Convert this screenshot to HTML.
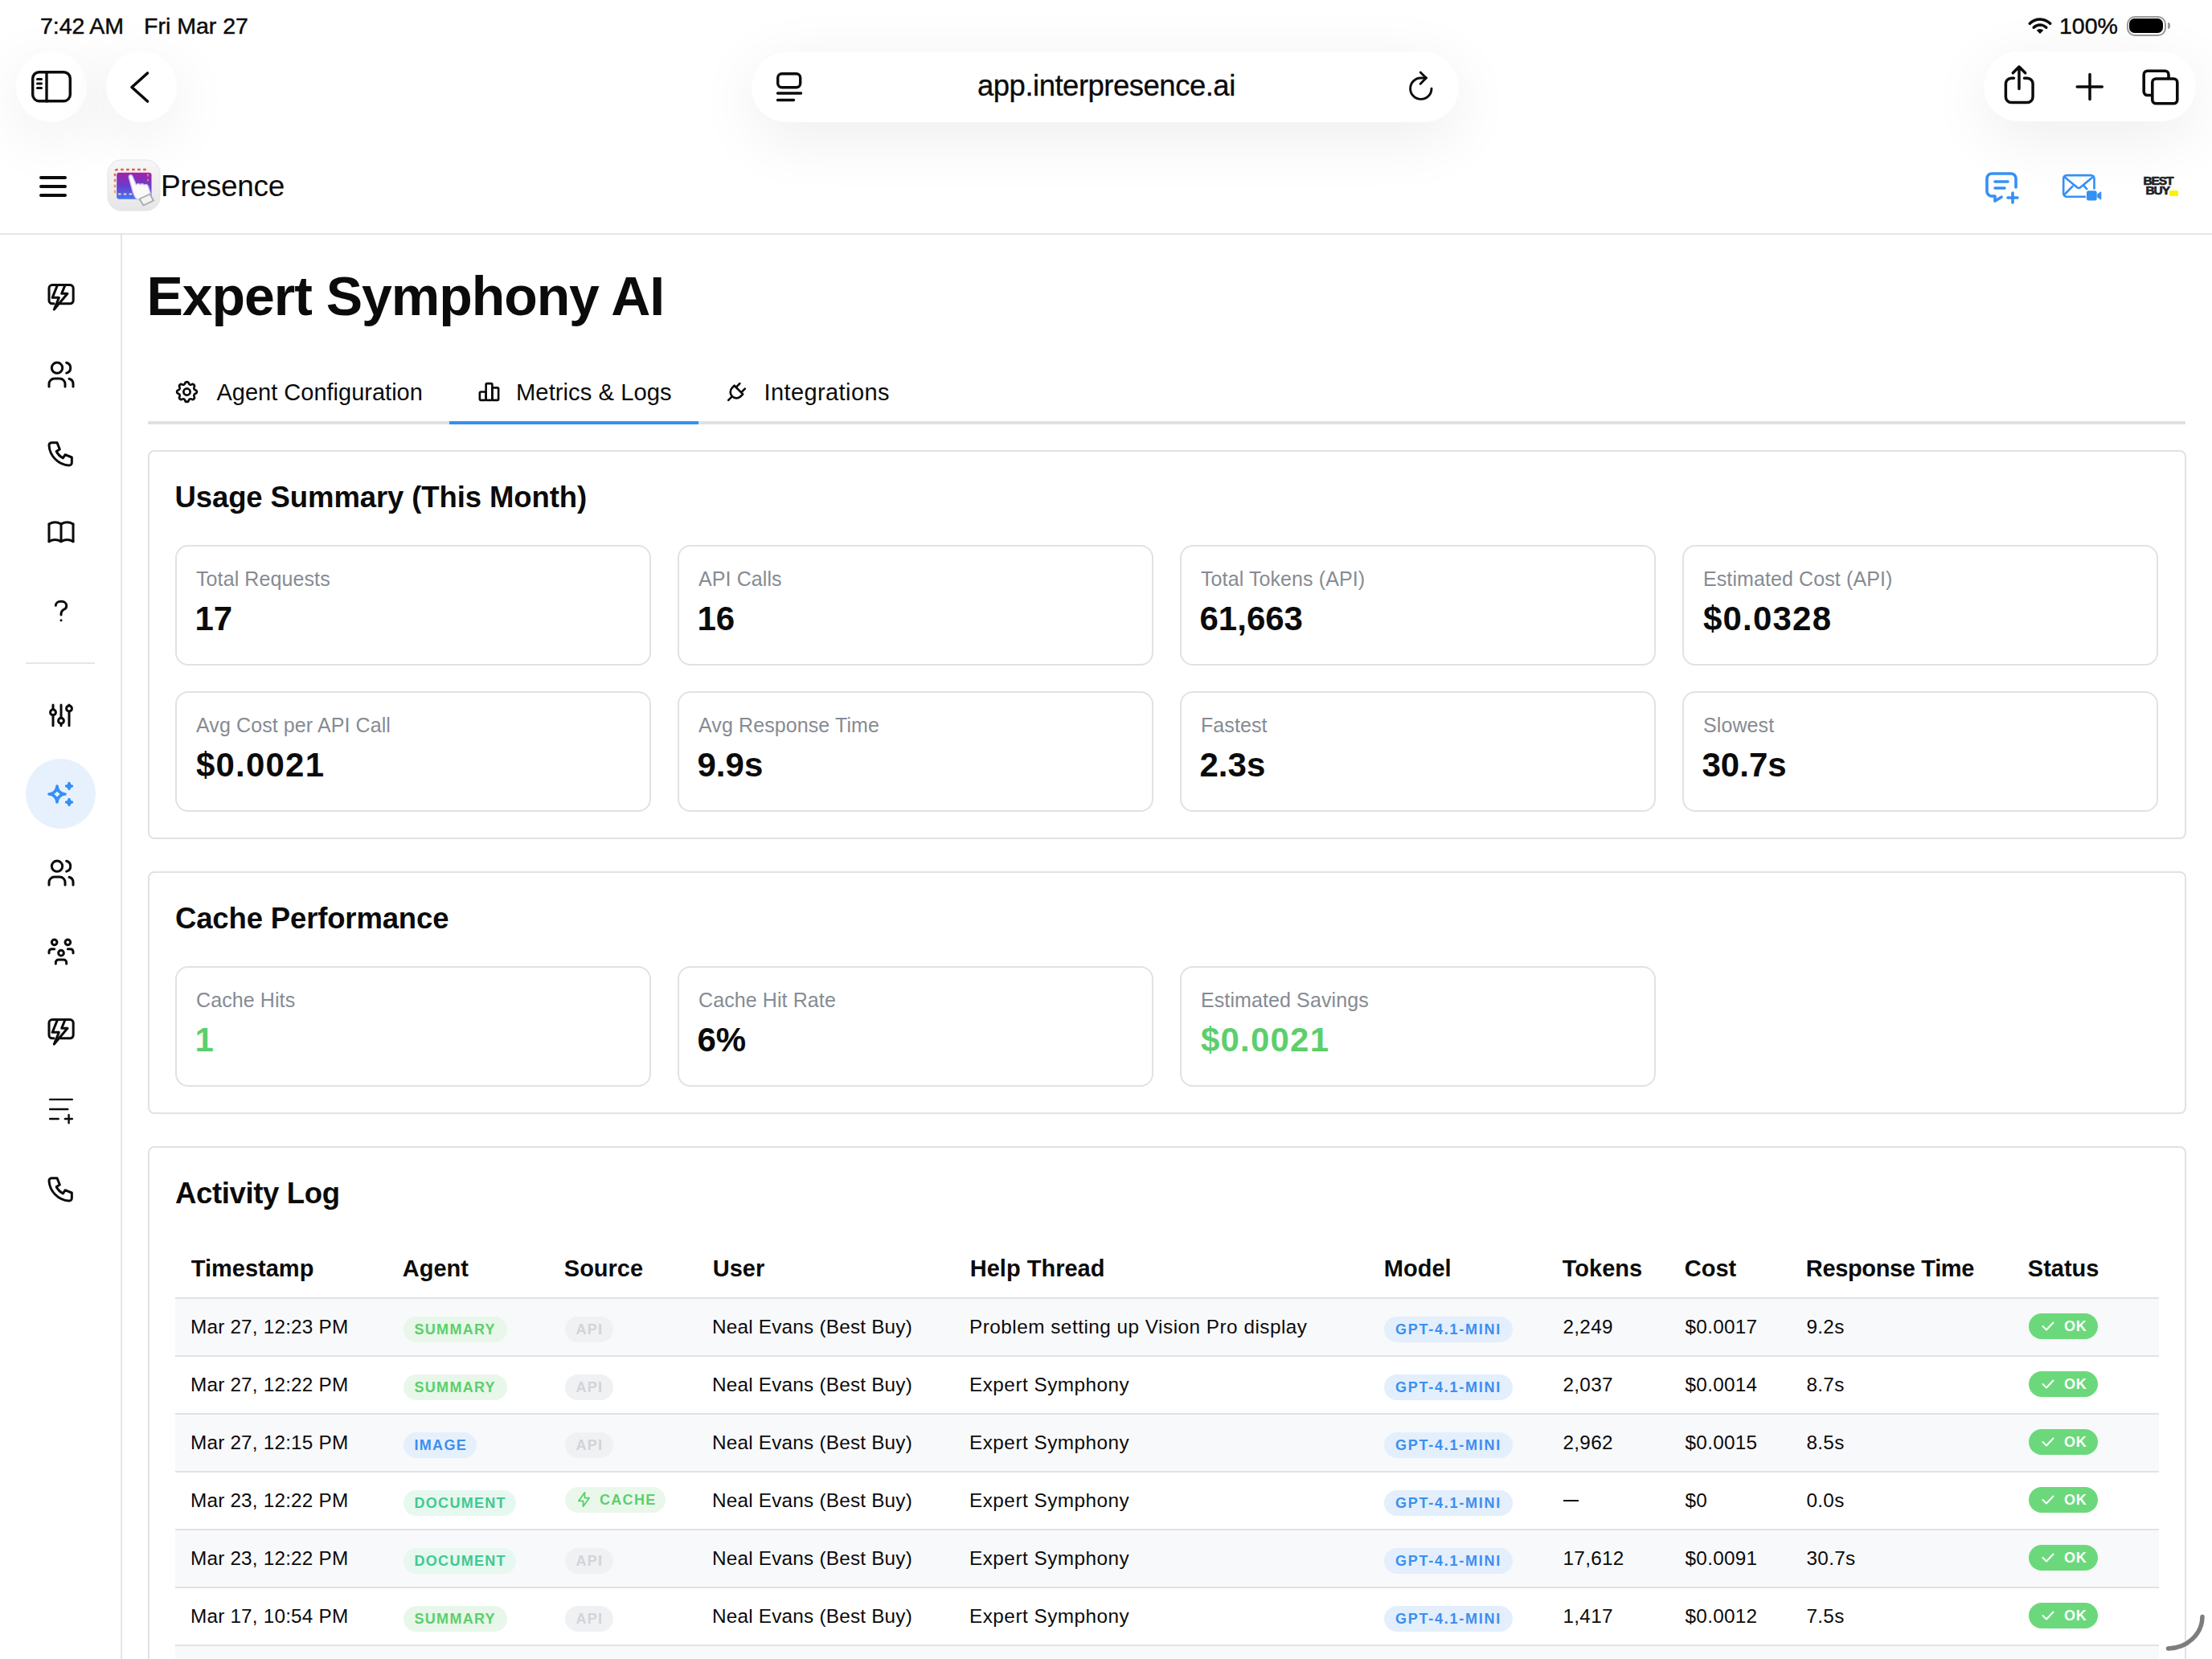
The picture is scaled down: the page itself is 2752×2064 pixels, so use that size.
<!DOCTYPE html><html><head><meta charset="utf-8"><style>
html,body{margin:0;padding:0;}
body{width:2752px;height:2064px;overflow:hidden;position:relative;background:#fff;font-family:"Liberation Sans",sans-serif;}
.t{position:absolute;line-height:1;white-space:nowrap;}
.b{position:absolute;box-sizing:border-box;}
.s{position:absolute;overflow:visible;}
.ic{fill:none;stroke:#0b0b0b;stroke-linecap:round;stroke-linejoin:round;}
</style></head><body>
<div class="t" style="left:50px;top:17.87px;font-size:28.5px;color:#0b0b0b;-webkit-text-stroke:0.45px #0b0b0b;">7:42&thinsp;AM</div>
<div class="t" style="left:179px;top:17.87px;font-size:28.5px;color:#0b0b0b;-webkit-text-stroke:0.45px #0b0b0b;">Fri Mar 27</div>
<div class="t" style="left:2562px;top:17.87px;font-size:28.5px;color:#0b0b0b;-webkit-text-stroke:0.45px #0b0b0b;">100%</div>
<svg class="s" style="left:2522px;top:20px;" width="32" height="24" viewBox="0 0 32 24"><path d="M16 22 L11.76 17.76 A6 6 0 0 1 20.24 17.76 Z" fill="#0b0b0b"/><path d="M8.2 14.2 A11 11 0 0 1 23.8 14.2" stroke="#0b0b0b" stroke-width="3.4" fill="none" stroke-linecap="round"/><path d="M3.3 9.3 A18 18 0 0 1 28.7 9.3" stroke="#0b0b0b" stroke-width="3.5" fill="none" stroke-linecap="round"/></svg>
<div class="b" style="left:2645.5px;top:19.5px;width:49.0px;height:25.0px;border:2px solid #9a9a9a;border-radius:10px;"></div>
<div class="b" style="left:2649px;top:23px;width:42px;height:18.299999999999997px;background:#000;border-radius:6.5px;"></div>
<div class="b" style="left:2696.5px;top:27.5px;width:3.5px;height:8.5px;background:#9a9a9a;border-radius:0 3px 3px 0;"></div>
<div class="b" style="left:20px;top:64px;width:88px;height:88px;box-shadow:0 18px 80px rgba(0,0,0,0.075);background:#fff;border-radius:50%;"></div>
<div class="b" style="left:132px;top:64px;width:88px;height:88px;box-shadow:0 18px 80px rgba(0,0,0,0.075);background:#fff;border-radius:50%;"></div>
<div class="b" style="left:935px;top:65px;width:880px;height:87px;box-shadow:0 18px 80px rgba(0,0,0,0.075);background:#fff;border-radius:44px;"></div>
<div class="b" style="left:2468px;top:64px;width:264px;height:87px;box-shadow:0 18px 80px rgba(0,0,0,0.075);background:#fff;border-radius:44px;"></div>
<svg class="s" style="left:37px;top:86px;" width="54" height="44" viewBox="0 0 54 44"><rect x="3.7" y="3.7" width="46.6" height="36" rx="8" class="ic" stroke-width="3.4"/><path d="M21 4v36" class="ic" stroke-width="3.4"/><path d="M9.5 12.5h5M9.5 18h5M9.5 23.5h5" class="ic" stroke-width="3"/></svg>
<svg class="s" style="left:160px;top:88px;" width="28" height="42" viewBox="0 0 28 42"><path d="M23.5 3 L4 20.5 L23.5 38" class="ic" stroke-width="3.6"/></svg>
<svg class="s" style="left:962px;top:86px;" width="40" height="44" viewBox="0 0 40 44"><rect x="5.7" y="5.7" width="28" height="17" rx="5" class="ic" stroke-width="3.4"/><path d="M5.5 30h29M5.5 38.5h20" class="ic" stroke-width="3.4"/></svg>
<div class="t" style="left:1216px;top:89.49px;font-size:36.5px;letter-spacing:-0.5px;color:#0b0b0b;-webkit-text-stroke:0.3px #0b0b0b;">app.interpresence.ai</div>
<svg class="s" style="left:1746px;top:84px;" width="44" height="44" viewBox="0 0 44 44"><path d="M28.5 13 H21.8 A13.2 13.2 0 1 0 35 26.2" class="ic" stroke-width="2.9"/><path d="M21.2 6 L28.3 13 L21.2 20.3" class="ic" stroke-width="2.9"/></svg>
<svg class="s" style="left:2488px;top:78px;" width="48" height="56" viewBox="0 0 48 56"><path d="M17.5 19.2 H14.4 A7 7 0 0 0 7.4 26.2 V42.5 A7 7 0 0 0 14.4 49.5 H34.1 A7 7 0 0 0 41.1 42.5 V26.2 A7 7 0 0 0 34.1 19.2 H30.5" class="ic" stroke-width="3.5"/><path d="M24 32.6 V5.5 M16.3 12.8 L24 5 L31.7 12.8" class="ic" stroke-width="3.5"/></svg>
<svg class="s" style="left:2578px;top:86px;" width="44" height="44" viewBox="0 0 44 44"><path d="M22 6.5 V37.6 M6.2 22 H37.3" class="ic" stroke-width="3.5"/></svg>
<svg class="s" style="left:2660px;top:82px;" width="56" height="52" viewBox="0 0 56 52"><path d="M16 36.5 H11.7 A4.5 4.5 0 0 1 7.2 32 V10.7 A4.5 4.5 0 0 1 11.7 6.2 H33.5 A4.5 4.5 0 0 1 38 10.7 V14.5" class="ic" stroke-width="3.6" stroke-linecap="butt"/><rect x="17.8" y="16" width="31" height="30.7" rx="4.5" class="ic" stroke-width="3.6"/></svg>
<div class="b" style="left:49px;top:219px;width:34px;height:4px;background:#0b0b0b;border-radius:2px;"></div>
<div class="b" style="left:49px;top:229.5px;width:34px;height:4.0px;background:#0b0b0b;border-radius:2px;"></div>
<div class="b" style="left:49px;top:241px;width:34px;height:4px;background:#0b0b0b;border-radius:2px;"></div>
<svg class="s" style="left:130px;top:194px" width="76" height="74" viewBox="0 0 76 74">
<defs><linearGradient id="lg" x1="0" y1="0" x2="0" y2="1"><stop offset="0" stop-color="#a322a6"/><stop offset="0.5" stop-color="#6a3ccf"/><stop offset="1" stop-color="#4677f2"/></linearGradient>
<linearGradient id="bgl" x1="0" y1="0" x2="0" y2="1"><stop offset="0" stop-color="#f6f6f6"/><stop offset="1" stop-color="#e6e6e6"/></linearGradient>
<linearGradient id="dl" x1="0" y1="0" x2="0" y2="1"><stop offset="0" stop-color="#e9563c"/><stop offset="1" stop-color="#f2b050"/></linearGradient></defs>
<rect x="4" y="5" width="65" height="63" rx="17" fill="url(#bgl)" stroke="#e4e4e4" stroke-width="1"/>
<rect x="15.2" y="20.8" width="43.3" height="33" rx="3" fill="url(#lg)"/>
<path d="M13 46.3 V20 A3 3 0 0 1 16 17 H51.5 A3 3 0 0 1 54 19.5" fill="none" stroke="url(#dl)" stroke-width="2.4" stroke-dasharray="3.6 3.4"/>
<path d="M54 22 V31.5" fill="none" stroke="#f0608a" stroke-width="2.2" stroke-dasharray="3.4 3"/>
<path d="M17 47.5 H35" fill="none" stroke="#f0d8b8" stroke-width="2.2" stroke-dasharray="3.6 3.2"/>
<path d="M30.2 26.5 C29.8 23.5 33.8 22.5 34.8 25 L39.5 36 C40.5 34 43.5 34 44.5 35.8 C45.5 34.2 48.5 34.3 49.3 36.2 C50.3 34.8 53.3 35 54.2 37 L57 45.5 C58 48 57.5 49.5 56 50.5 L46 54.5 C43 55.5 40 54 38 51.5 C37 49.5 36.5 48 35.5 46 Z" fill="#fafafa" stroke="#c8b8f0" stroke-width="1.2" stroke-linejoin="round"/>
<path d="M43.5 53.5 L56.5 47.5 L61 55.5 L48.5 61.5 Z" fill="#f3f3f3" stroke="#a9a9a9" stroke-width="1.8" stroke-linejoin="round"/>
</svg>
<div class="t" style="left:200px;top:213.27px;font-size:37px;letter-spacing:-0.3px;color:#0b0b0b;">Presence</div>
<svg class="s" style="left:2466px;top:208px;" width="48" height="48" viewBox="0 0 24 24"><g fill="none" stroke="#3490f4" stroke-width="1.8" stroke-linecap="round" stroke-linejoin="round"><path d="M8 9h8"/><path d="M8 13h6"/><path d="M12.01 18.594l-4.01 2.406v-3h-2a3 3 0 0 1 -3 -3v-8a3 3 0 0 1 3 -3h12a3 3 0 0 1 3 3v5.5"/><path d="M16 19h6"/><path d="M19 16v6"/></g></svg>
<svg class="s" style="left:2562px;top:212px;" width="56" height="42" viewBox="0 0 56 42"><path d="M33 32.7 H9.2 A4 4 0 0 1 5.2 28.7 V10.1 A4 4 0 0 1 9.2 6.1 H39.5 A4 4 0 0 1 43.5 10.1 V23.5" fill="none" stroke="#3490f4" stroke-width="2.6"/><path d="M6.6 8.2 L22 21 Q24.2 22.8 26.4 21 L41.7 8.2 M6 30.5 L17.2 19.2 M30.5 19.2 L35 23.8" fill="none" stroke="#3490f4" stroke-width="2.6" stroke-linecap="butt"/><rect x="34" y="25.3" width="12.7" height="12.3" rx="2.5" fill="#3490f4"/><path d="M47.7 29.5 L51.8 26.8 V36.1 L47.7 33.4 Z" fill="#3490f4" stroke="#3490f4" stroke-width="1" stroke-linejoin="round"/></svg>
<div class="t" style="left:2666.5px;top:216.57px;font-size:15.5px;font-weight:700;letter-spacing:-1.1px;color:#1d2226;-webkit-text-stroke:0.7px #1d2226;">BEST</div>
<div class="t" style="left:2669.5px;top:228.57px;font-size:15.5px;font-weight:700;letter-spacing:-1.1px;color:#1d2226;-webkit-text-stroke:0.7px #1d2226;">BUY</div>
<div class="b" style="left:2699px;top:237px;width:10.5px;height:6.599999999999994px;background:#fff200;border-radius:1.5px;"></div>
<div class="b" style="left:0px;top:290px;width:2752px;height:2px;background:#e3e6ea;"></div>
<div class="b" style="left:150px;top:292px;width:2px;height:1772px;background:#e3e6ea;"></div>
<svg class="s" style="left:56px;top:349px" width="40" height="40" viewBox="0 0 24 24" fill="none" stroke="#0b0b0b" stroke-width="1.8" stroke-linecap="round" stroke-linejoin="round"><path d="M6.6 17.3 H5.4 A2.4 2.4 0 0 1 3 14.9 V5.75 A2.4 2.4 0 0 1 5.4 3.35 H18.7 A2.4 2.4 0 0 1 21.1 5.75 V14.9 A2.4 2.4 0 0 1 18.7 17.3 H11.6"/><path d="M9.3 3.4 L5.5 12.8 H10.4 L6.8 21.6 L16.8 9.8 H12.4 L15 3.4"/></svg>
<svg class="s" style="left:56px;top:446px" width="40" height="40" viewBox="0 0 24 24" fill="none" stroke="#0b0b0b" stroke-width="1.8" stroke-linecap="round" stroke-linejoin="round"><path d="M5 7a4 4 0 1 0 8 0a4 4 0 1 0 -8 0"/><path d="M3 21v-2a4 4 0 0 1 4 -4h4a4 4 0 0 1 4 4v2"/><path d="M16 3.13a4 4 0 0 1 0 7.75"/><path d="M21 21v-2a4 4 0 0 0 -3 -3.85"/></svg>
<svg class="s" style="left:56px;top:544px" width="40" height="40" viewBox="0 0 24 24" fill="none" stroke="#0b0b0b" stroke-width="1.8" stroke-linecap="round" stroke-linejoin="round"><path d="M5 4h4l2 5l-2.5 1.5a11 11 0 0 0 5 5l1.5 -2.5l5 2v4a2 2 0 0 1 -2 2a16 16 0 0 1 -15 -15a2 2 0 0 1 2 -2"/></svg>
<svg class="s" style="left:56px;top:642px" width="40" height="40" viewBox="0 0 24 24" fill="none" stroke="#0b0b0b" stroke-width="1.8" stroke-linecap="round" stroke-linejoin="round"><path d="M3 19a9 9 0 0 1 9 0a9 9 0 0 1 9 0"/><path d="M3 6a9 9 0 0 1 9 0a9 9 0 0 1 9 0"/><path d="M3 6l0 13"/><path d="M12 6l0 13"/><path d="M21 6l0 13"/></svg>
<svg class="s" style="left:56px;top:739.6px" width="40" height="40" viewBox="0 0 24 24" fill="none" stroke="#0b0b0b" stroke-width="1.8" stroke-linecap="round" stroke-linejoin="round"><path d="M8 8a3.5 3 0 0 1 3.5 -3h1a3.5 3 0 0 1 3.5 3a3 3 0 0 1 -2 3a3 4 0 0 0 -2 4"/><path d="M12 19l0 .01"/></svg>
<div class="b" style="left:32px;top:824px;width:86px;height:2px;background:#e3e6ea;"></div>
<svg class="s" style="left:56px;top:869px" width="40" height="40" viewBox="0 0 24 24" fill="none" stroke="#0b0b0b" stroke-width="1.8" stroke-linecap="round" stroke-linejoin="round"><path d="M6 4.8V20.3M12 4.8V20.3M18 4.8V20.3"/><circle cx="6" cy="10.3" r="2.05" fill="#fff"/><circle cx="12" cy="16.6" r="2.05" fill="#fff"/><circle cx="18" cy="7.5" r="2.05" fill="#fff"/></svg>
<div class="b" style="left:32px;top:944px;width:87px;height:87px;background:#e7f1fd;border-radius:50%;"></div>
<svg class="s" style="left:56px;top:968px" width="40" height="40" viewBox="0 0 24 24" fill="none" stroke="#3490f4" stroke-width="2.2" stroke-linecap="round" stroke-linejoin="round"><path d="M16 18a2 2 0 0 1 2 2a2 2 0 0 1 2 -2a2 2 0 0 1 -2 -2a2 2 0 0 1 -2 2zm0 -12a2 2 0 0 1 2 2a2 2 0 0 1 2 -2a2 2 0 0 1 -2 -2a2 2 0 0 1 -2 2zm-7 12a6 6 0 0 1 6 -6a6 6 0 0 1 -6 -6a6 6 0 0 1 -6 6a6 6 0 0 1 6 6z"/></svg>
<svg class="s" style="left:56px;top:1066px" width="40" height="40" viewBox="0 0 24 24" fill="none" stroke="#0b0b0b" stroke-width="1.8" stroke-linecap="round" stroke-linejoin="round"><path d="M5 7a4 4 0 1 0 8 0a4 4 0 1 0 -8 0"/><path d="M3 21v-2a4 4 0 0 1 4 -4h4a4 4 0 0 1 4 4v2"/><path d="M16 3.13a4 4 0 0 1 0 7.75"/><path d="M21 21v-2a4 4 0 0 0 -3 -3.85"/></svg>
<svg class="s" style="left:56px;top:1164px" width="40" height="40" viewBox="0 0 24 24" fill="none" stroke="#0b0b0b" stroke-width="1.8" stroke-linecap="round" stroke-linejoin="round"><path d="M10 13a2 2 0 1 0 4 0a2 2 0 0 0 -4 0"/><path d="M8 21v-1a2 2 0 0 1 2 -2h4a2 2 0 0 1 2 2v1"/><path d="M15 5a2 2 0 1 0 4 0a2 2 0 0 0 -4 0"/><path d="M17 10h2a2 2 0 0 1 2 2v1"/><path d="M5 5a2 2 0 1 0 4 0a2 2 0 0 0 -4 0"/><path d="M3 13v-1a2 2 0 0 1 2 -2h2"/></svg>
<svg class="s" style="left:56px;top:1263px" width="40" height="40" viewBox="0 0 24 24" fill="none" stroke="#0b0b0b" stroke-width="1.8" stroke-linecap="round" stroke-linejoin="round"><path d="M6.6 17.3 H5.4 A2.4 2.4 0 0 1 3 14.9 V5.75 A2.4 2.4 0 0 1 5.4 3.35 H18.7 A2.4 2.4 0 0 1 21.1 5.75 V14.9 A2.4 2.4 0 0 1 18.7 17.3 H11.6"/><path d="M9.3 3.4 L5.5 12.8 H10.4 L6.8 21.6 L16.8 9.8 H12.4 L15 3.4"/></svg>
<svg class="s" style="left:56px;top:1362px" width="40" height="40" viewBox="0 0 24 24" fill="none" stroke="#0b0b0b" stroke-width="1.45" stroke-linecap="round" stroke-linejoin="round"><path d="M3.7 3.5H20.3M3.7 10.75H17M3.7 18H10M14.9 18H20.3M17.75 15V21.1"/></svg>
<svg class="s" style="left:56px;top:1459px" width="40" height="40" viewBox="0 0 24 24" fill="none" stroke="#0b0b0b" stroke-width="1.8" stroke-linecap="round" stroke-linejoin="round"><path d="M5 4h4l2 5l-2.5 1.5a11 11 0 0 0 5 5l1.5 -2.5l5 2v4a2 2 0 0 1 -2 2a16 16 0 0 1 -15 -15a2 2 0 0 1 2 -2"/></svg>
<div class="t" style="left:182.5px;top:334.42px;font-size:68px;font-weight:700;letter-spacing:-1.05px;color:#0b0b0b;">Expert Symphony AI</div>
<svg class="s" style="left:215.5px;top:471px" width="33" height="33" viewBox="0 0 24 24" fill="none" stroke="#0b0b0b" stroke-width="1.95" stroke-linecap="round" stroke-linejoin="round"><path d="M10.325 4.317c.426 -1.756 2.924 -1.756 3.35 0a1.724 1.724 0 0 0 2.573 1.066c1.543 -.94 3.31 .826 2.37 2.37a1.724 1.724 0 0 0 1.065 2.572c1.756 .426 1.756 2.924 0 3.35a1.724 1.724 0 0 0 -1.066 2.573c.94 1.543 -.826 3.31 -2.37 2.37a1.724 1.724 0 0 0 -2.572 1.065c-.426 1.756 -2.924 1.756 -3.35 0a1.724 1.724 0 0 0 -2.573 -1.066c-1.543 .94 -3.31 -.826 -2.37 -2.37a1.724 1.724 0 0 0 -1.065 -2.572c-1.756 -.426 -1.756 -2.924 0 -3.35a1.724 1.724 0 0 0 1.066 -2.573c-.94 -1.543 .826 -3.31 2.37 -2.37c1 .608 2.296 .07 2.572 -1.065z"/><path d="M9 12a3 3 0 1 0 6 0a3 3 0 0 0 -6 0"/></svg>
<div class="t" style="left:269.5px;top:473.74px;font-size:29px;color:#0b0b0b;">Agent Configuration</div>
<svg class="s" style="left:592.5px;top:472px" width="31" height="31" viewBox="0 0 24 24" fill="none" stroke="#0b0b0b" stroke-width="2.05" stroke-linecap="round" stroke-linejoin="round"><path d="M3 13a1 1 0 0 1 1 -1h4a1 1 0 0 1 1 1v6a1 1 0 0 1 -1 1h-4a1 1 0 0 1 -1 -1z"/><path d="M15 9a1 1 0 0 1 1 -1h4a1 1 0 0 1 1 1v10a1 1 0 0 1 -1 1h-4a1 1 0 0 1 -1 -1z"/><path d="M9 5a1 1 0 0 1 1 -1h4a1 1 0 0 1 1 1v14a1 1 0 0 1 -1 1h-4a1 1 0 0 1 -1 -1z"/></svg>
<div class="t" style="left:642px;top:473.57px;font-size:29.2px;letter-spacing:0.05px;color:#0b0b0b;">Metrics &amp; Logs</div>
<svg class="s" style="left:900.5px;top:472px" width="31" height="31" viewBox="0 0 24 24" fill="none" stroke="#0b0b0b" stroke-width="2.05" stroke-linecap="round" stroke-linejoin="round"><path d="M9.785 6l8.215 8.215l-2.054 2.054a5.81 5.81 0 1 1 -8.215 -8.215l2.054 -2.054z"/><path d="M4 20l3.5 -3.5"/><path d="M15 4l-3.5 3.5"/><path d="M20 9l-3.5 3.5"/></svg>
<div class="t" style="left:950.5px;top:473.74px;font-size:29px;letter-spacing:0.4px;color:#0b0b0b;">Integrations</div>
<div class="b" style="left:184px;top:524px;width:2535px;height:4px;background:#dfe2e5;"></div>
<div class="b" style="left:559px;top:524px;width:310px;height:4px;background:#3490f4;"></div>
<div class="b" style="left:184px;top:560px;width:2536px;height:484px;border:2px solid #dfe2e6;border-radius:8px;"></div>
<div class="t" style="left:217.5px;top:601.29px;font-size:36.5px;font-weight:700;letter-spacing:-0.1px;color:#0b0b0b;">Usage Summary (This Month)</div>
<div class="b" style="left:217.5px;top:678px;width:592.0px;height:150px;border:2px solid #dfe2e6;border-radius:16px;"></div>
<div class="t" style="left:244.0px;top:707.83px;font-size:25px;letter-spacing:0.1px;color:#868b93;">Total Requests</div>
<div class="t" style="left:242.5px;top:748.93px;font-size:42px;font-weight:700;color:#0b0b0b;">17</div>
<div class="b" style="left:842.5px;top:678px;width:592.0px;height:150px;border:2px solid #dfe2e6;border-radius:16px;"></div>
<div class="t" style="left:869.0px;top:707.83px;font-size:25px;letter-spacing:0.1px;color:#868b93;">API Calls</div>
<div class="t" style="left:867.5px;top:748.93px;font-size:42px;font-weight:700;color:#0b0b0b;">16</div>
<div class="b" style="left:1467.5px;top:678px;width:592.0px;height:150px;border:2px solid #dfe2e6;border-radius:16px;"></div>
<div class="t" style="left:1494.0px;top:707.83px;font-size:25px;letter-spacing:0.1px;color:#868b93;">Total Tokens (API)</div>
<div class="t" style="left:1492.5px;top:748.93px;font-size:42px;font-weight:700;color:#0b0b0b;">61,663</div>
<div class="b" style="left:2092.5px;top:678px;width:592.0px;height:150px;border:2px solid #dfe2e6;border-radius:16px;"></div>
<div class="t" style="left:2119.0px;top:707.83px;font-size:25px;letter-spacing:0.1px;color:#868b93;">Estimated Cost (API)</div>
<div class="t" style="left:2119.0px;top:748.93px;font-size:42px;font-weight:700;letter-spacing:1.2px;color:#0b0b0b;">$0.0328</div>
<div class="b" style="left:217.5px;top:860px;width:592.0px;height:150px;border:2px solid #dfe2e6;border-radius:16px;"></div>
<div class="t" style="left:244.0px;top:889.83px;font-size:25px;letter-spacing:0.1px;color:#868b93;">Avg Cost per API Call</div>
<div class="t" style="left:244.0px;top:930.93px;font-size:42px;font-weight:700;letter-spacing:1.2px;color:#0b0b0b;">$0.0021</div>
<div class="b" style="left:842.5px;top:860px;width:592.0px;height:150px;border:2px solid #dfe2e6;border-radius:16px;"></div>
<div class="t" style="left:869.0px;top:889.83px;font-size:25px;letter-spacing:0.1px;color:#868b93;">Avg Response Time</div>
<div class="t" style="left:867.5px;top:930.93px;font-size:42px;font-weight:700;color:#0b0b0b;">9.9s</div>
<div class="b" style="left:1467.5px;top:860px;width:592.0px;height:150px;border:2px solid #dfe2e6;border-radius:16px;"></div>
<div class="t" style="left:1494.0px;top:889.83px;font-size:25px;letter-spacing:0.1px;color:#868b93;">Fastest</div>
<div class="t" style="left:1492.5px;top:930.93px;font-size:42px;font-weight:700;color:#0b0b0b;">2.3s</div>
<div class="b" style="left:2092.5px;top:860px;width:592.0px;height:150px;border:2px solid #dfe2e6;border-radius:16px;"></div>
<div class="t" style="left:2119.0px;top:889.83px;font-size:25px;letter-spacing:0.1px;color:#868b93;">Slowest</div>
<div class="t" style="left:2117.5px;top:930.93px;font-size:42px;font-weight:700;color:#0b0b0b;">30.7s</div>
<div class="b" style="left:184px;top:1084px;width:2536px;height:302px;border:2px solid #dfe2e6;border-radius:8px;"></div>
<div class="t" style="left:218px;top:1125.49px;font-size:36.5px;font-weight:700;letter-spacing:-0.15px;color:#0b0b0b;">Cache Performance</div>
<div class="b" style="left:217.5px;top:1202px;width:592.0px;height:150px;border:2px solid #dfe2e6;border-radius:16px;"></div>
<div class="t" style="left:244.0px;top:1231.83px;font-size:25px;letter-spacing:0.1px;color:#868b93;">Cache Hits</div>
<div class="t" style="left:242.5px;top:1272.93px;font-size:42px;font-weight:700;color:#5ccf6c;">1</div>
<div class="b" style="left:842.5px;top:1202px;width:592.0px;height:150px;border:2px solid #dfe2e6;border-radius:16px;"></div>
<div class="t" style="left:869.0px;top:1231.83px;font-size:25px;letter-spacing:0.1px;color:#868b93;">Cache Hit Rate</div>
<div class="t" style="left:867.5px;top:1272.93px;font-size:42px;font-weight:700;color:#0b0b0b;">6%</div>
<div class="b" style="left:1467.5px;top:1202px;width:592.0px;height:150px;border:2px solid #dfe2e6;border-radius:16px;"></div>
<div class="t" style="left:1494.0px;top:1231.83px;font-size:25px;letter-spacing:0.1px;color:#868b93;">Estimated Savings</div>
<div class="t" style="left:1494.0px;top:1272.93px;font-size:42px;font-weight:700;letter-spacing:1.2px;color:#5ccf6c;">$0.0021</div>
<div class="b" style="left:184px;top:1426px;width:2536px;height:774px;border:2px solid #dfe2e6;border-radius:8px;"></div>
<div class="t" style="left:218px;top:1467.39px;font-size:36.5px;font-weight:700;letter-spacing:-0.35px;color:#0b0b0b;">Activity Log</div>
<div class="t" style="left:237.8px;top:1563.84px;font-size:29px;font-weight:700;color:#0b0b0b;">Timestamp</div>
<div class="t" style="left:500.8px;top:1563.84px;font-size:29px;font-weight:700;color:#0b0b0b;">Agent</div>
<div class="t" style="left:701.8px;top:1563.84px;font-size:29px;font-weight:700;color:#0b0b0b;">Source</div>
<div class="t" style="left:886.8px;top:1563.84px;font-size:29px;font-weight:700;color:#0b0b0b;">User</div>
<div class="t" style="left:1206.8px;top:1563.84px;font-size:29px;font-weight:700;color:#0b0b0b;">Help Thread</div>
<div class="t" style="left:1721.8px;top:1563.84px;font-size:29px;font-weight:700;color:#0b0b0b;">Model</div>
<div class="t" style="left:1943.8px;top:1563.84px;font-size:29px;font-weight:700;color:#0b0b0b;">Tokens</div>
<div class="t" style="left:2095.8px;top:1563.84px;font-size:29px;font-weight:700;color:#0b0b0b;">Cost</div>
<div class="t" style="left:2246.8px;top:1563.84px;font-size:29px;font-weight:700;letter-spacing:-0.35px;color:#0b0b0b;">Response Time</div>
<div class="t" style="left:2522.8px;top:1563.84px;font-size:29px;font-weight:700;color:#0b0b0b;">Status</div>
<div class="b" style="left:218px;top:1614px;width:2468px;height:2px;background:#dfe2e6;"></div>
<div class="b" style="left:218px;top:1616px;width:2468px;height:70px;background:#f8f9fb;"></div>
<div class="b" style="left:218px;top:1686px;width:2468px;height:2px;background:#dfe2e6;"></div>
<div class="t" style="left:237px;top:1639.42px;font-size:24.3px;letter-spacing:0.2px;color:#0b0b0b;">Mar 27, 12:23 PM</div>
<div class="b" style="left:502px;top:1638px;width:129px;height:32px;border-radius:16px;background:#e8f7ea;"></div>
<div class="t" style="left:515.5px;top:1644.76px;font-size:18px;font-weight:700;letter-spacing:1.3px;color:#5ccf6c;">SUMMARY</div>
<div class="b" style="left:703px;top:1638px;width:60px;height:32px;border-radius:16px;background:#f0f1f3;"></div>
<div class="t" style="left:716.5px;top:1644.76px;font-size:18px;font-weight:700;letter-spacing:1.3px;color:#d1d4d8;">API</div>
<div class="t" style="left:886px;top:1639.42px;font-size:24.3px;letter-spacing:0.22px;color:#0b0b0b;">Neal Evans (Best Buy)</div>
<div class="t" style="left:1206px;top:1639.42px;font-size:24.3px;letter-spacing:0.5px;color:#0b0b0b;">Problem setting up Vision Pro display</div>
<div class="b" style="left:1722px;top:1638px;width:160px;height:32px;border-radius:16px;background:#e3effc;"></div>
<div class="t" style="left:1736px;top:1644.76px;font-size:18px;font-weight:700;letter-spacing:1.75px;color:#3b8ff0;">GPT-4.1-MINI</div>
<div class="t" style="left:1944.5px;top:1639.42px;font-size:24.3px;letter-spacing:0.3px;color:#0b0b0b;">2,249</div>
<div class="t" style="left:2096.5px;top:1639.42px;font-size:24.3px;letter-spacing:0.3px;color:#0b0b0b;">$0.0017</div>
<div class="t" style="left:2247.5px;top:1639.42px;font-size:24.3px;letter-spacing:0.3px;color:#0b0b0b;">9.2s</div>
<div class="b" style="left:2524px;top:1634px;width:86px;height:32px;background:#6bd97b;border-radius:16px;"></div>
<svg class="s" style="left:2539px;top:1643px;" width="18" height="14" viewBox="0 0 18 14"><path d="M2.5 7 L7 11.5 L15.5 2.5" fill="none" stroke="#fff" stroke-width="2" stroke-linecap="round" stroke-linejoin="round"/></svg>
<div class="t" style="left:2568px;top:1640.76px;font-size:18px;font-weight:700;letter-spacing:0.8px;color:#fff;">OK</div>
<div class="b" style="left:218px;top:1758px;width:2468px;height:2px;background:#dfe2e6;"></div>
<div class="t" style="left:237px;top:1711.42px;font-size:24.3px;letter-spacing:0.2px;color:#0b0b0b;">Mar 27, 12:22 PM</div>
<div class="b" style="left:502px;top:1710px;width:129px;height:32px;border-radius:16px;background:#e8f7ea;"></div>
<div class="t" style="left:515.5px;top:1716.76px;font-size:18px;font-weight:700;letter-spacing:1.3px;color:#5ccf6c;">SUMMARY</div>
<div class="b" style="left:703px;top:1710px;width:60px;height:32px;border-radius:16px;background:#f0f1f3;"></div>
<div class="t" style="left:716.5px;top:1716.76px;font-size:18px;font-weight:700;letter-spacing:1.3px;color:#d1d4d8;">API</div>
<div class="t" style="left:886px;top:1711.42px;font-size:24.3px;letter-spacing:0.22px;color:#0b0b0b;">Neal Evans (Best Buy)</div>
<div class="t" style="left:1206px;top:1711.42px;font-size:24.3px;letter-spacing:0.5px;color:#0b0b0b;">Expert Symphony</div>
<div class="b" style="left:1722px;top:1710px;width:160px;height:32px;border-radius:16px;background:#e3effc;"></div>
<div class="t" style="left:1736px;top:1716.76px;font-size:18px;font-weight:700;letter-spacing:1.75px;color:#3b8ff0;">GPT-4.1-MINI</div>
<div class="t" style="left:1944.5px;top:1711.42px;font-size:24.3px;letter-spacing:0.3px;color:#0b0b0b;">2,037</div>
<div class="t" style="left:2096.5px;top:1711.42px;font-size:24.3px;letter-spacing:0.3px;color:#0b0b0b;">$0.0014</div>
<div class="t" style="left:2247.5px;top:1711.42px;font-size:24.3px;letter-spacing:0.3px;color:#0b0b0b;">8.7s</div>
<div class="b" style="left:2524px;top:1706px;width:86px;height:32px;background:#6bd97b;border-radius:16px;"></div>
<svg class="s" style="left:2539px;top:1715px;" width="18" height="14" viewBox="0 0 18 14"><path d="M2.5 7 L7 11.5 L15.5 2.5" fill="none" stroke="#fff" stroke-width="2" stroke-linecap="round" stroke-linejoin="round"/></svg>
<div class="t" style="left:2568px;top:1712.76px;font-size:18px;font-weight:700;letter-spacing:0.8px;color:#fff;">OK</div>
<div class="b" style="left:218px;top:1760px;width:2468px;height:70px;background:#f8f9fb;"></div>
<div class="b" style="left:218px;top:1830px;width:2468px;height:2px;background:#dfe2e6;"></div>
<div class="t" style="left:237px;top:1783.42px;font-size:24.3px;letter-spacing:0.2px;color:#0b0b0b;">Mar 27, 12:15 PM</div>
<div class="b" style="left:502px;top:1782px;width:91px;height:32px;border-radius:16px;background:#e5f0fc;"></div>
<div class="t" style="left:515.5px;top:1788.76px;font-size:18px;font-weight:700;letter-spacing:1.3px;color:#3b8ff0;">IMAGE</div>
<div class="b" style="left:703px;top:1782px;width:60px;height:32px;border-radius:16px;background:#f0f1f3;"></div>
<div class="t" style="left:716.5px;top:1788.76px;font-size:18px;font-weight:700;letter-spacing:1.3px;color:#d1d4d8;">API</div>
<div class="t" style="left:886px;top:1783.42px;font-size:24.3px;letter-spacing:0.22px;color:#0b0b0b;">Neal Evans (Best Buy)</div>
<div class="t" style="left:1206px;top:1783.42px;font-size:24.3px;letter-spacing:0.5px;color:#0b0b0b;">Expert Symphony</div>
<div class="b" style="left:1722px;top:1782px;width:160px;height:32px;border-radius:16px;background:#e3effc;"></div>
<div class="t" style="left:1736px;top:1788.76px;font-size:18px;font-weight:700;letter-spacing:1.75px;color:#3b8ff0;">GPT-4.1-MINI</div>
<div class="t" style="left:1944.5px;top:1783.42px;font-size:24.3px;letter-spacing:0.3px;color:#0b0b0b;">2,962</div>
<div class="t" style="left:2096.5px;top:1783.42px;font-size:24.3px;letter-spacing:0.3px;color:#0b0b0b;">$0.0015</div>
<div class="t" style="left:2247.5px;top:1783.42px;font-size:24.3px;letter-spacing:0.3px;color:#0b0b0b;">8.5s</div>
<div class="b" style="left:2524px;top:1778px;width:86px;height:32px;background:#6bd97b;border-radius:16px;"></div>
<svg class="s" style="left:2539px;top:1787px;" width="18" height="14" viewBox="0 0 18 14"><path d="M2.5 7 L7 11.5 L15.5 2.5" fill="none" stroke="#fff" stroke-width="2" stroke-linecap="round" stroke-linejoin="round"/></svg>
<div class="t" style="left:2568px;top:1784.76px;font-size:18px;font-weight:700;letter-spacing:0.8px;color:#fff;">OK</div>
<div class="b" style="left:218px;top:1902px;width:2468px;height:2px;background:#dfe2e6;"></div>
<div class="t" style="left:237px;top:1855.42px;font-size:24.3px;letter-spacing:0.2px;color:#0b0b0b;">Mar 23, 12:22 PM</div>
<div class="b" style="left:502px;top:1854px;width:140px;height:32px;border-radius:16px;background:#e6f8f0;"></div>
<div class="t" style="left:515.5px;top:1860.76px;font-size:18px;font-weight:700;letter-spacing:1.3px;color:#40c990;">DOCUMENT</div>
<div class="b" style="left:703px;top:1850px;width:125px;height:32px;border-radius:16px;background:#eaf8ec;"></div>
<svg class="s" style="left:714.5px;top:1853.5px;" width="23" height="23" viewBox="0 0 24 24"><path d="M13 3l0 7l6 0l-8 11l0 -7l-6 0l8 -11" fill="none" stroke="#5ccf6c" stroke-width="1.9" stroke-linecap="round" stroke-linejoin="round"/></svg>
<div class="t" style="left:746px;top:1856.76px;font-size:18px;font-weight:700;letter-spacing:1.3px;color:#5ccf6c;">CACHE</div>
<div class="t" style="left:886px;top:1855.42px;font-size:24.3px;letter-spacing:0.22px;color:#0b0b0b;">Neal Evans (Best Buy)</div>
<div class="t" style="left:1206px;top:1855.42px;font-size:24.3px;letter-spacing:0.5px;color:#0b0b0b;">Expert Symphony</div>
<div class="b" style="left:1722px;top:1854px;width:160px;height:32px;border-radius:16px;background:#e3effc;"></div>
<div class="t" style="left:1736px;top:1860.76px;font-size:18px;font-weight:700;letter-spacing:1.75px;color:#3b8ff0;">GPT-4.1-MINI</div>
<div class="b" style="left:1945px;top:1866px;width:19px;height:2px;background:#0b0b0b;"></div>
<div class="t" style="left:2096.5px;top:1855.42px;font-size:24.3px;letter-spacing:0.3px;color:#0b0b0b;">$0</div>
<div class="t" style="left:2247.5px;top:1855.42px;font-size:24.3px;letter-spacing:0.3px;color:#0b0b0b;">0.0s</div>
<div class="b" style="left:2524px;top:1850px;width:86px;height:32px;background:#6bd97b;border-radius:16px;"></div>
<svg class="s" style="left:2539px;top:1859px;" width="18" height="14" viewBox="0 0 18 14"><path d="M2.5 7 L7 11.5 L15.5 2.5" fill="none" stroke="#fff" stroke-width="2" stroke-linecap="round" stroke-linejoin="round"/></svg>
<div class="t" style="left:2568px;top:1856.76px;font-size:18px;font-weight:700;letter-spacing:0.8px;color:#fff;">OK</div>
<div class="b" style="left:218px;top:1904px;width:2468px;height:70px;background:#f8f9fb;"></div>
<div class="b" style="left:218px;top:1974px;width:2468px;height:2px;background:#dfe2e6;"></div>
<div class="t" style="left:237px;top:1927.42px;font-size:24.3px;letter-spacing:0.2px;color:#0b0b0b;">Mar 23, 12:22 PM</div>
<div class="b" style="left:502px;top:1926px;width:140px;height:32px;border-radius:16px;background:#e6f8f0;"></div>
<div class="t" style="left:515.5px;top:1932.76px;font-size:18px;font-weight:700;letter-spacing:1.3px;color:#40c990;">DOCUMENT</div>
<div class="b" style="left:703px;top:1926px;width:60px;height:32px;border-radius:16px;background:#f0f1f3;"></div>
<div class="t" style="left:716.5px;top:1932.76px;font-size:18px;font-weight:700;letter-spacing:1.3px;color:#d1d4d8;">API</div>
<div class="t" style="left:886px;top:1927.42px;font-size:24.3px;letter-spacing:0.22px;color:#0b0b0b;">Neal Evans (Best Buy)</div>
<div class="t" style="left:1206px;top:1927.42px;font-size:24.3px;letter-spacing:0.5px;color:#0b0b0b;">Expert Symphony</div>
<div class="b" style="left:1722px;top:1926px;width:160px;height:32px;border-radius:16px;background:#e3effc;"></div>
<div class="t" style="left:1736px;top:1932.76px;font-size:18px;font-weight:700;letter-spacing:1.75px;color:#3b8ff0;">GPT-4.1-MINI</div>
<div class="t" style="left:1944.5px;top:1927.42px;font-size:24.3px;letter-spacing:0.3px;color:#0b0b0b;">17,612</div>
<div class="t" style="left:2096.5px;top:1927.42px;font-size:24.3px;letter-spacing:0.3px;color:#0b0b0b;">$0.0091</div>
<div class="t" style="left:2247.5px;top:1927.42px;font-size:24.3px;letter-spacing:0.3px;color:#0b0b0b;">30.7s</div>
<div class="b" style="left:2524px;top:1922px;width:86px;height:32px;background:#6bd97b;border-radius:16px;"></div>
<svg class="s" style="left:2539px;top:1931px;" width="18" height="14" viewBox="0 0 18 14"><path d="M2.5 7 L7 11.5 L15.5 2.5" fill="none" stroke="#fff" stroke-width="2" stroke-linecap="round" stroke-linejoin="round"/></svg>
<div class="t" style="left:2568px;top:1928.76px;font-size:18px;font-weight:700;letter-spacing:0.8px;color:#fff;">OK</div>
<div class="b" style="left:218px;top:2046px;width:2468px;height:2px;background:#dfe2e6;"></div>
<div class="t" style="left:237px;top:1999.42px;font-size:24.3px;letter-spacing:0.2px;color:#0b0b0b;">Mar 17, 10:54 PM</div>
<div class="b" style="left:502px;top:1998px;width:129px;height:32px;border-radius:16px;background:#e8f7ea;"></div>
<div class="t" style="left:515.5px;top:2004.76px;font-size:18px;font-weight:700;letter-spacing:1.3px;color:#5ccf6c;">SUMMARY</div>
<div class="b" style="left:703px;top:1998px;width:60px;height:32px;border-radius:16px;background:#f0f1f3;"></div>
<div class="t" style="left:716.5px;top:2004.76px;font-size:18px;font-weight:700;letter-spacing:1.3px;color:#d1d4d8;">API</div>
<div class="t" style="left:886px;top:1999.42px;font-size:24.3px;letter-spacing:0.22px;color:#0b0b0b;">Neal Evans (Best Buy)</div>
<div class="t" style="left:1206px;top:1999.42px;font-size:24.3px;letter-spacing:0.5px;color:#0b0b0b;">Expert Symphony</div>
<div class="b" style="left:1722px;top:1998px;width:160px;height:32px;border-radius:16px;background:#e3effc;"></div>
<div class="t" style="left:1736px;top:2004.76px;font-size:18px;font-weight:700;letter-spacing:1.75px;color:#3b8ff0;">GPT-4.1-MINI</div>
<div class="t" style="left:1944.5px;top:1999.42px;font-size:24.3px;letter-spacing:0.3px;color:#0b0b0b;">1,417</div>
<div class="t" style="left:2096.5px;top:1999.42px;font-size:24.3px;letter-spacing:0.3px;color:#0b0b0b;">$0.0012</div>
<div class="t" style="left:2247.5px;top:1999.42px;font-size:24.3px;letter-spacing:0.3px;color:#0b0b0b;">7.5s</div>
<div class="b" style="left:2524px;top:1994px;width:86px;height:32px;background:#6bd97b;border-radius:16px;"></div>
<svg class="s" style="left:2539px;top:2003px;" width="18" height="14" viewBox="0 0 18 14"><path d="M2.5 7 L7 11.5 L15.5 2.5" fill="none" stroke="#fff" stroke-width="2" stroke-linecap="round" stroke-linejoin="round"/></svg>
<div class="t" style="left:2568px;top:2000.76px;font-size:18px;font-weight:700;letter-spacing:0.8px;color:#fff;">OK</div>
<div class="b" style="left:218px;top:2048px;width:2468px;height:70px;background:#f8f9fb;"></div>
<svg class="s" style="left:2680px;top:2000px;" width="72" height="64" viewBox="0 0 72 64"><path d="M60 11.5 A43 40 0 0 1 17.5 51" fill="none" stroke="#7d7d7d" stroke-width="5.5" stroke-linecap="round"/></svg>
</body></html>
